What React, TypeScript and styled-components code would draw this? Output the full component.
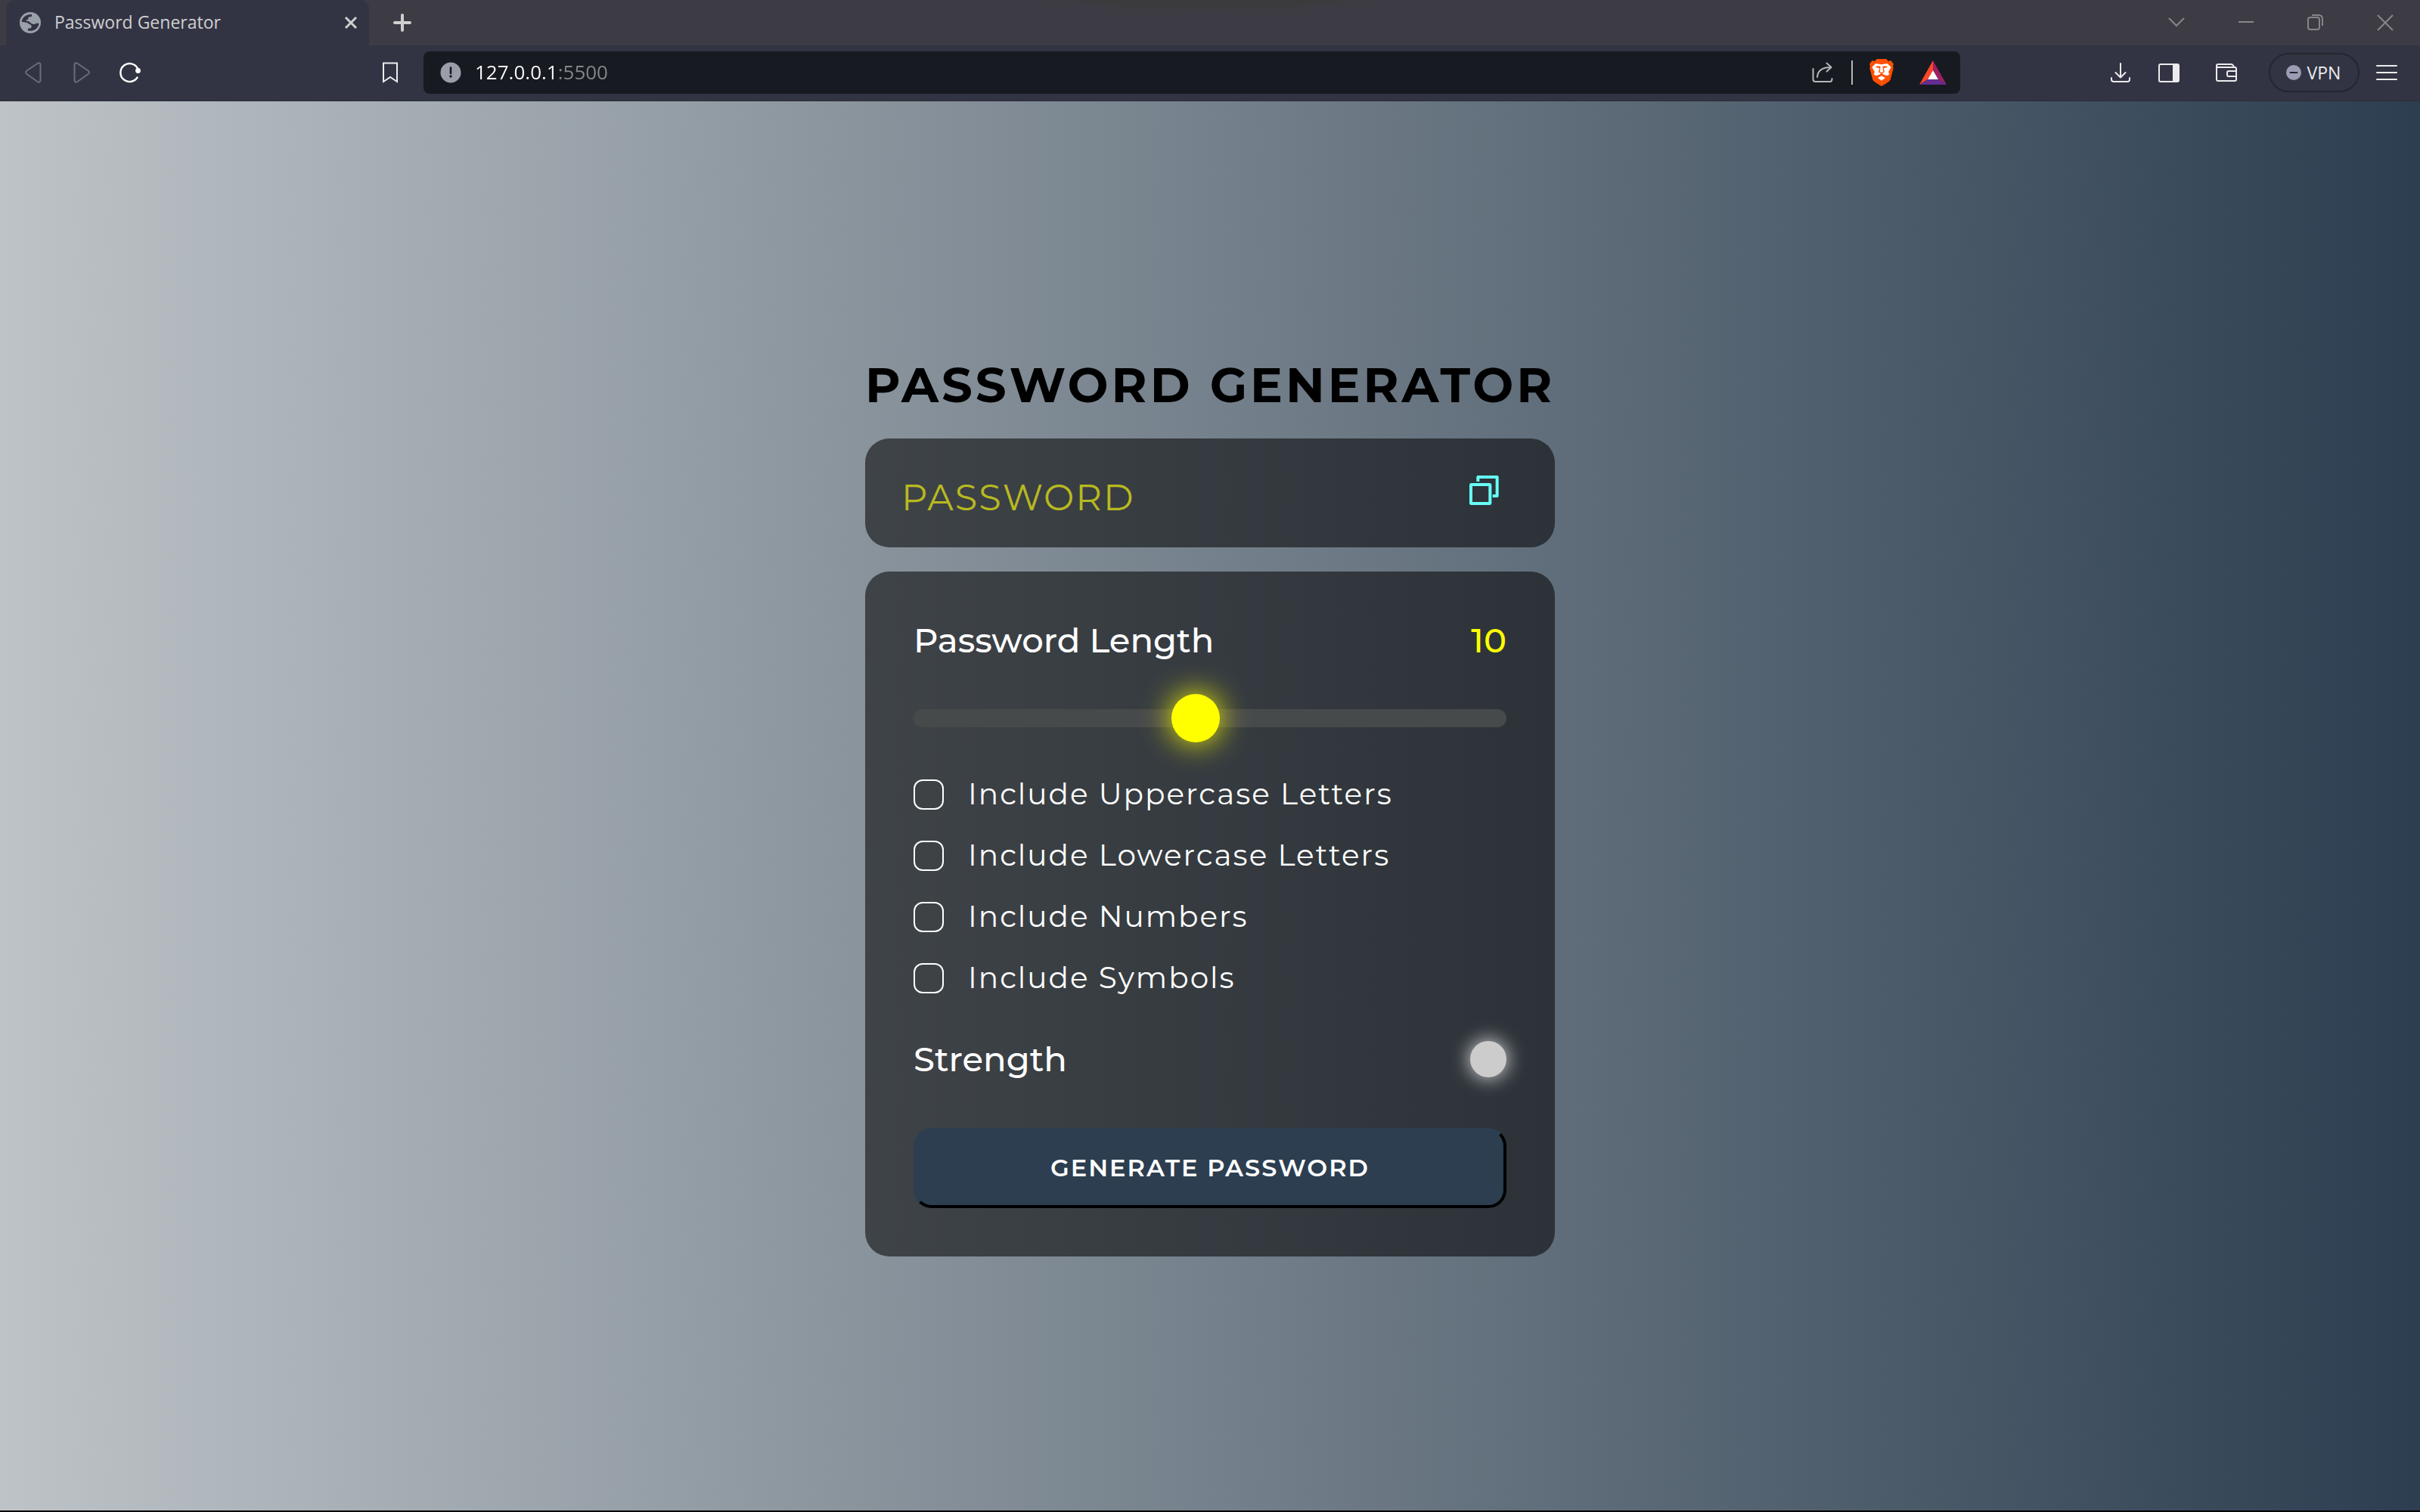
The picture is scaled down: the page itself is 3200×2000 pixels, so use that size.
import React, { useState } from "react";
import styled, { createGlobalStyle } from "styled-components";

const GlobalStyle = createGlobalStyle`
  *, *::before, *::after { box-sizing: border-box; }
  html, body, #root { height: 100%; }
  body { margin: 0; background: #000; font-family: "Montserrat", "Inter", sans-serif; }
  button, input { font: inherit; color: inherit; margin: 0; }
  svg { display: block; }
`;

const UI_FONT = `"Open Sans", "Noto Sans", sans-serif`;
const DISPLAY_FONT = `"Montserrat", "Inter", sans-serif`;

const Browser = styled.div`
  min-height: 100%;
  display: flex;
  flex-direction: column;
  font-family: ${UI_FONT};
  padding-bottom: 2px;
`;

const TitleBar = styled.div`
  display: flex;
  height: 60px;
  padding-left: 8px;
  color: #86868a;
  background: radial-gradient(ellipse 240px 16px at 50% 0, #3b3b3e 60%, #3d3c45 100%);
`;

const Tab = styled.div`
  display: flex;
  align-items: center;
  gap: 18px;
  width: 480px;
  padding: 0 8px 0 18px;
  border-radius: 12px 12px 0 0;
  background: #323443;
`;

const TabTitle = styled.span`
  flex: 1;
  padding-bottom: 2px;
  font-size: 23px;
  line-height: 32px;
  color: #cfcfd0;
`;

const IconButton = styled.button<{ $width?: number; $color?: string }>`
  display: flex;
  flex: none;
  align-items: center;
  justify-content: center;
  width: ${(p) => p.$width ?? 64}px;
  padding: 0;
  border: 0;
  background: none;
  color: ${(p) => p.$color ?? "#ececee"};
  cursor: pointer;
`;

const WindowControls = styled.div`
  display: flex;
  margin-left: auto;
`;

const Toolbar = styled.div`
  display: grid;
  grid-template-columns: 560px 1fr 608px;
  align-items: center;
  height: 74px;
  padding-bottom: 1px;
  background: #323443;
  border-bottom: 1px solid #2b2d3a;
`;

const NavGroup = styled.div<{ $end?: boolean }>`
  display: flex;
  align-items: center;
  justify-content: ${(p) => (p.$end ? "flex-end" : "space-between")};
  padding: 0 12px;
`;

const Cluster = styled.div`
  display: flex;
`;

const AddressBar = styled.div`
  display: flex;
  align-items: center;
  height: 56px;
  padding: 0 6px 0 22px;
  gap: 18px;
  border-radius: 8px;
  background: #171a21;
`;

const AddressInput = styled.input`
  flex: 1;
  min-width: 0;
  padding: 0 0 2px;
  border: 0;
  outline: 0;
  font-size: 26px;
  line-height: 40px;
  color: transparent;
  background: linear-gradient(90deg, #fff 107px, #85878c 107px);
  -webkit-background-clip: text;
  background-clip: text;
`;

const AddressActions = styled.div`
  display: flex;
  align-items: center;
  gap: 22px;
`;

const Divider = styled.span`
  width: 2px;
  height: 32px;
  background: #b4b5b8;
`;

const VpnButton = styled.button`
  display: flex;
  align-items: center;
  justify-content: center;
  gap: 8px;
  width: 120px;
  height: 52px;
  margin: 0 4px 0 24px;
  padding: 0 2px 0 0;
  border: 2px solid #24252f;
  border-radius: 26px;
  background: none;
  font-size: 23px;
  line-height: 32px;
  color: #ececee;
`;

const WalletSlot = styled.div`
  display: flex;
  margin-left: 12px;
`;

const Page = styled.main`
  flex: 1;
  display: flex;
  align-items: center;
  justify-content: center;
  background: linear-gradient(to right, #bdc3c7, #2c3e50);
  font-family: ${DISPLAY_FONT};
`;

const Generator = styled.div`
  display: flex;
  flex-direction: column;
  gap: 32px;
  width: 100%;
  max-width: 912px;
`;

const Heading = styled.h1`
  margin: 0;
  font-size: 64px;
  line-height: 78px;
  font-weight: 700;
  letter-spacing: 4px;
  text-align: center;
  white-space: nowrap;
  color: #000;
`;

const Panel = styled.section`
  border-radius: 32px;
  background: rgba(0, 0, 0, 0.54);
  color: #fff;
`;

const DisplayPanel = styled(Panel)`
  display: flex;
  height: 144px;
  padding: 0 74px 0 48px;
`;

const PasswordField = styled.input`
  flex: 1;
  min-width: 0;
  padding: 12px 0 0;
  border: 0;
  outline: 0;
  background: none;
  font-size: 48px;
  font-weight: 400;
  letter-spacing: 2px;
  color: #ff0;
  &::placeholder {
    color: #b8b91f;
    opacity: 1;
  }
`;

const CopyButton = styled(IconButton)`
  padding-bottom: 8px;
`;

const SettingsPanel = styled(Panel)`
  display: flex;
  flex-direction: column;
  padding: 64px;
`;

const Row = styled.div`
  display: flex;
  align-items: center;
  justify-content: space-between;
  font-size: 45px;
  line-height: 54px;
  font-weight: 500;
`;

const LengthValue = styled.output`
  color: #ff0;
`;

const Slider = styled.input`
  appearance: none;
  width: 100%;
  height: 24px;
  margin: 64px 0;
  border-radius: 12px;
  background: #474a4b;
  outline: 0;
  cursor: pointer;
  &::-webkit-slider-thumb {
    appearance: none;
    width: 64px;
    height: 64px;
    border-radius: 50%;
    background: #ff0;
    box-shadow: 0 0 40px #ff0;
  }
`;

const Options = styled.div`
  display: flex;
  flex-direction: column;
  gap: 32px;
  margin-bottom: 56px;
`;

const Option = styled.label`
  display: flex;
  align-items: center;
  gap: 32px;
  font-size: 39px;
  line-height: 49px;
  font-weight: 400;
  letter-spacing: 2px;
  cursor: pointer;
`;

const CheckBox = styled.input`
  appearance: none;
  width: 40px;
  height: 40px;
  border: 2px solid #fff;
  border-radius: 12px;
  cursor: pointer;
  &:checked {
    background: #ff0;
  }
`;

const StrengthLight = styled.span`
  width: 48px;
  height: 48px;
  border-radius: 50%;
  background: #ccc;
  box-shadow: 0 0 24px 2px #ccc;
`;

const GenerateButton = styled.button`
  width: 100%;
  height: 106px;
  margin-top: 64px;
  padding: 0 0 2px;
  border: 4px solid;
  border-color: #2c3e50 #000 #000 #2c3e50;
  border-radius: 24px;
  background: #2c3e50;
  font-size: 32px;
  font-weight: 600;
  letter-spacing: 2px;
  color: #fff;
  cursor: pointer;
`;

const GlobeIcon = () => (
  <svg width="28" height="28" viewBox="78 48 84 84" aria-hidden="true">
    <circle cx="120" cy="90" r="42" fill="#9aa0a9" />
    <path fill="#323443" d="M86 87C87 70 103 56 126 57V64C126 67 122 67 117 67C112 67 112 70 112 74C112 78 108 79 104 79V83C106 84 114 82 118 88C122 91 128 98 138 96C143 94 140 92 146 92H154C154 110 136 126 111 122V113C118 113 125 113 125 106C125 100 122 97 116 96C110 88 96 89 86 87Z" />
  </svg>
);

const BackIcon = ({ flip }: { flip?: boolean }) => (
  <svg width="22" height="28" viewBox="0 0 22 28" fill="none" stroke="#6b6d79" strokeWidth="2" strokeLinejoin="round" aria-hidden="true">
    <path
      d={
        flip
          ? "M1.500 4V24C1.500 26.500 3.500 27.500 5.500 26L19.500 16C21.500 14.500 21.500 13 19.500 11.500L5.500 2C3.500 .5 1.500 1.500 1.500 4Z"
          : "M20.500 4V24C20.500 26.500 18.500 27.500 16.500 26L2.500 16C.5 14.500 .5 13 2.500 11.500L16.500 2C18.500 .5 20.500 1.500 20.500 4Z"
      }
    />
  </svg>
);

const ReloadIcon = () => (
  <svg width="28" height="28" viewBox="0 0 28 28" fill="none" aria-hidden="true">
    <path d="M23.500 20.500A12 12 0 1 1 24 8.500" stroke="#fff" strokeWidth="2.400" strokeLinecap="round" />
    <circle cx="24.500" cy="11.500" r="3.400" fill="#fff" />
  </svg>
);

const BookmarkIcon = () => (
  <svg width="20" height="28" viewBox="0 0 20 28" fill="none" stroke="currentColor" strokeWidth="2" aria-hidden="true">
    <path d="M1 1.500H19V26L10 20L1 26Z" />
  </svg>
);

const InfoIcon = () => (
  <svg width="28" height="28" viewBox="0 0 28 28" aria-hidden="true">
    <circle cx="14" cy="14" r="13.500" fill="#9b9ea9" />
    <path d="M14 7.500V15" stroke="#171a21" strokeWidth="2.600" strokeLinecap="round" />
    <circle cx="14" cy="19" r="1.700" fill="#171a21" />
  </svg>
);

const ShareIcon = () => (
  <svg width="28" height="28" viewBox="0 0 28 28" fill="none" stroke="#b6b7ba" strokeWidth="2" strokeLinecap="round" strokeLinejoin="round" aria-hidden="true">
    <path d="M1.500 9V23C1.500 25.500 2.500 26 4.500 26H24C26 26 26.500 25 26.500 22" />
    <path d="M7 20C7.500 12 13 7 25 7M19.500 1.500L25.500 7L19.500 12.500" />
  </svg>
);

const LionIcon = () => (
  <svg width="32" height="36" viewBox="95 42 96 108" aria-hidden="true">
    <path fill="#ff4f00" d="M124 42H162L170 51L180 48L191 62L188 70L190 78L178 125Q176 131 143 150Q110 131 108 125L96 78L98 70L95 62L106 48L116 51Z" />
    <path fill="#fff" d="M120 60L143 64L166 60L181 74L170 94L174 102Q170 109 162 108L147 102V98L155 94L151 79L168 74L158 70L143 73L128 70L118 74L135 79L131 94L139 98V102L124 108Q116 109 112 102L116 94L105 74Z" />
    <path fill="#fff" d="M139 72H147L150 92L143 96L136 92Z" />
    <path fill="#fff" d="M128 117L143 109L158 117L143 128Z" />
  </svg>
);

const RewardsIcon = () => (
  <svg width="36" height="32" viewBox="0 0 36 32" aria-hidden="true">
    <path fill="#ff4724" d="M18 0V13L11 25L0 32Z" />
    <path fill="#9e1f63" d="M18 0L36 32L25 25L18 13Z" />
    <path fill="#662d91" d="M0 32L11 25H25L36 32Z" />
    <path fill="#fff" d="M18 13L25 25H11Z" />
  </svg>
);

const DownloadIcon = () => (
  <svg width="26" height="28" viewBox="0 0 26 28" fill="none" stroke="currentColor" strokeWidth="2" strokeLinecap="round" strokeLinejoin="round" aria-hidden="true">
    <path d="M13 2V20M6.500 14L13 20.500L19.500 14M1 21V23C1 25.500 2 26 4 26H22C24 26 25 25.500 25 23V21" />
  </svg>
);

const SidebarIcon = () => (
  <svg width="28" height="25" viewBox="0 0 28 25" aria-hidden="true">
    <rect x="1" y="1" width="26" height="23" rx="2" fill="none" stroke="currentColor" strokeWidth="2" />
    <rect x="19" y="1" width="8" height="23" fill="currentColor" />
  </svg>
);

const WalletIcon = () => (
  <svg width="28" height="24" viewBox="0 0 28 24" fill="none" stroke="currentColor" strokeWidth="2" strokeLinejoin="round" aria-hidden="true">
    <path d="M1 3V21Q1 23 3 23H25Q27 23 27 21V7Q27 5 25 5H3Q1 5 1 3Q1 1 3 1H20Q23 1 24 5M27 10H17Q15 10 15 12V15Q15 17 17 17H27" />
  </svg>
);

const CopyIcon = () => (
  <svg width="39" height="39" viewBox="128 87 117 117" fill="none" stroke="#66fff8" strokeWidth="12" strokeLinejoin="round" aria-hidden="true">
    <rect x="134" y="123" width="76" height="75" rx="2" />
    <path d="M162 111V93H238V168H220" />
  </svg>
);

const windowIcons: { label: string; path: string }[] = [
  { label: "Search tabs", path: "M1 5L11 15L21 5" },
  { label: "Minimize", path: "M1 10H21" },
  { label: "Restore", path: "M4 4H13Q16 4 16 7V17Q16 20 13 20H4Q1 20 1 17V7Q1 4 4 4M6 1H15Q20 1 20 6V15" },
  { label: "Close window", path: "M1 1L21 21M21 1L1 21" },
];

const optionLabels = [
  "Include Uppercase Letters",
  "Include Lowercase Letters",
  "Include Numbers",
  "Include Symbols",
];

export default function App() {
  const [length, setLength] = useState(10);

  return (
    <>
      <GlobalStyle />
      <Browser>
        <TitleBar>
          <Tab>
            <GlobeIcon />
            <TabTitle>Password Generator</TabTitle>
            <IconButton $width={32} $color="#cfcfd0" aria-label="Close tab">
              <svg width="18" height="18" viewBox="0 0 18 18" stroke="currentColor" strokeWidth="3" aria-hidden="true">
                <path d="M2 2L16 16M16 2L2 16" />
              </svg>
            </IconButton>
          </Tab>
          <IconButton $width={88} $color="#cfcfd0" aria-label="New tab">
            <svg width="24" height="24" viewBox="0 0 24 24" stroke="currentColor" strokeWidth="4" strokeLinecap="round" aria-hidden="true">
              <path d="M12 2V22M2 12H22" />
            </svg>
          </IconButton>
          <WindowControls>
            {windowIcons.map((icon) => (
              <IconButton key={icon.label} $width={92} $color="#86868a" aria-label={icon.label}>
                <svg width="22" height="22" viewBox="0 0 22 22" fill="none" stroke="currentColor" strokeWidth="2" aria-hidden="true">
                  <path d={icon.path} />
                </svg>
              </IconButton>
            ))}
          </WindowControls>
        </TitleBar>

        <Toolbar>
          <NavGroup>
            <Cluster>
              <IconButton aria-label="Back"><BackIcon /></IconButton>
              <IconButton aria-label="Forward"><BackIcon flip /></IconButton>
              <IconButton aria-label="Reload"><ReloadIcon /></IconButton>
            </Cluster>
            <IconButton aria-label="Bookmark this page"><BookmarkIcon /></IconButton>
          </NavGroup>
          <AddressBar>
            <InfoIcon />
            <AddressInput aria-label="Address" defaultValue="127.0.0.1:5500" spellCheck={false} />
            <AddressActions>
              <IconButton $width={32} aria-label="Share"><ShareIcon /></IconButton>
              <Divider />
              <IconButton $width={32} aria-label="Shields"><LionIcon /></IconButton>
              <IconButton $width={60} aria-label="Rewards"><RewardsIcon /></IconButton>
            </AddressActions>
          </AddressBar>
          <NavGroup $end>
            <IconButton aria-label="Downloads"><DownloadIcon /></IconButton>
            <IconButton aria-label="Sidebar"><SidebarIcon /></IconButton>
            <WalletSlot>
              <IconButton aria-label="Wallet"><WalletIcon /></IconButton>
            </WalletSlot>
            <VpnButton>
              <svg width="20" height="20" viewBox="0 0 20 20" aria-hidden="true">
                <circle cx="10" cy="10" r="10" fill="#9a9db4" />
                <path d="M5.500 10H14.500" stroke="#24252f" strokeWidth="2" strokeLinecap="round" />
              </svg>
              VPN
            </VpnButton>
            <IconButton aria-label="Menu">
              <svg width="28" height="22" viewBox="0 0 28 22" stroke="currentColor" strokeWidth="2" strokeLinecap="round" aria-hidden="true">
                <path d="M1 2H27M1 11H27M1 20H27" />
              </svg>
            </IconButton>
          </NavGroup>
        </Toolbar>

        <Page>
          <Generator>
            <Heading>PASSWORD GENERATOR</Heading>
            <DisplayPanel>
              <PasswordField readOnly placeholder="PASSWORD" aria-label="Generated password" />
              <CopyButton $width={39} aria-label="Copy password"><CopyIcon /></CopyButton>
            </DisplayPanel>
            <SettingsPanel>
              <Row>
                <label htmlFor="length">Password Length</label>
                <LengthValue htmlFor="length">{length}</LengthValue>
              </Row>
              <Slider
                id="length"
                type="range"
                min={1}
                max={20}
                value={length}
                onChange={(e) => setLength(Number(e.target.value))}
              />
              <Options>
                {optionLabels.map((label) => (
                  <Option key={label}>
                    <CheckBox type="checkbox" />
                    {label}
                  </Option>
                ))}
              </Options>
              <Row>
                <span>Strength</span>
                <StrengthLight />
              </Row>
              <GenerateButton>GENERATE PASSWORD</GenerateButton>
            </SettingsPanel>
          </Generator>
        </Page>
      </Browser>
    </>
  );
}
